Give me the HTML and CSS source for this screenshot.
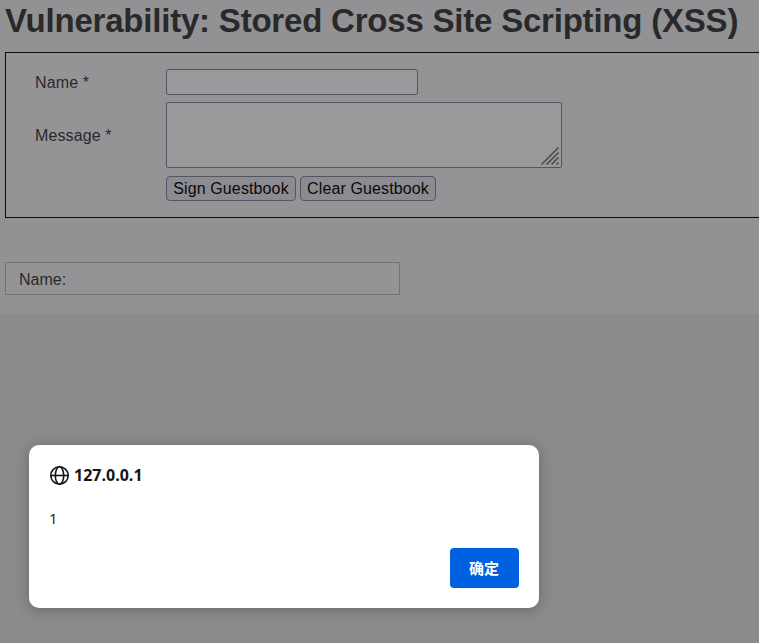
FILE: index.html
```html
<!DOCTYPE html>
<html lang="en">
<head>
<meta charset="utf-8">
<title>Vulnerability: Stored Cross Site Scripting (XSS)</title>
<link rel="stylesheet" href="styles.css">
</head>
<body>
<main class="page">
  <h1 class="title">Vulnerability: Stored Cross Site Scripting (XSS)</h1>
  <form class="guestbook">
    <label for="name">Name *</label>
    <input class="field name-field" id="name" type="text">
    <label for="message">Message *</label>
    <div class="message-wrap">
      <textarea class="field message-field" id="message"></textarea>
      <svg class="grip" width="18" height="18" viewBox="0 0 18 18" fill="none" stroke="#49494b" stroke-width="1.5"><path d="M.5 17.500 17.500.5M5.500 17.500 17.500 5.500M10.500 17.500 17.500 10.500M15.500 17.500 17.500 15.500"/></svg>
    </div>
    <div class="actions">
      <button class="btn sign" type="button">Sign Guestbook</button>
      <button class="btn clear" type="button">Clear Guestbook</button>
    </div>
  </form>
  <div class="comment">Name:</div>
</main>
<section class="dialog" role="dialog">
  <header class="origin">
    <svg width="20" height="20" viewBox="0 0 20 20" fill="none" stroke="#15141a" stroke-width="1.6"><circle cx="10.500" cy="10.500" r="8.700"/><ellipse cx="10.500" cy="10.500" rx="4.200" ry="8.700"/><path d="M1.800 10.500h17.400"/></svg>
    <span>127.0.0.1</span>
  </header>
  <p class="alert-text">1</p>
  <button class="ok" type="button">确定</button>
</section>
</body>
</html>
```

FILE: styles.css
```css
* { box-sizing: border-box; }
body {
  margin: 0;
  height: 643px;
  overflow: hidden;
  background: #8b8b8d;
  color: #29292b;
  font: 16px/20px "Liberation Sans", Arial, sans-serif;
}
.page {
  height: 314px;
  padding-left: 5px;
  background: #929294;
}
.title {
  margin: 0;
  height: 52px;
  font-size: 33px;
  letter-spacing: -.21px;
  line-height: 41px;
  white-space: nowrap;
}
.guestbook {
  display: grid;
  grid-template-columns: 131px 396px;
  grid-template-rows: 26px 66px 25px;
  row-gap: 7px;
  align-items: center;
  width: 780px;
  height: 166px;
  padding: 16px 0 0 29px;
  border: 1px solid #09090b;
  background: #949496;
}
.guestbook label {
  padding-top: 2px;
  letter-spacing: .12px;
}
.field {
  display: block;
  margin: 0;
  border: 1px solid #565663;
  border-radius: 2px;
  background: #99999b;
  outline: none;
  resize: none;
}
.name-field { width: 252px; height: 26px; }
.message-wrap { position: relative; height: 66px; }
.message-field { width: 396px; height: 66px; }
.grip { position: absolute; right: 3px; bottom: 3px; }
.actions {
  grid-column: 2;
  display: flex;
  gap: 4px;
  padding-top: 2px;
}
.btn {
  height: 25px;
  padding: 0;
  border: 1px solid #565663;
  border-radius: 4px;
  background: #8c8c90;
  color: #09090b;
  font: inherit;
  letter-spacing: .12px;
  white-space: nowrap;
}
.sign { width: 130px; }
.clear { width: 136px; }
.comment {
  width: 395px;
  height: 33px;
  margin-top: 44px;
  padding-left: 13px;
  border: 1px solid #747476;
  background: #949496;
  line-height: 33px;
}
.dialog {
  position: absolute;
  left: 29px;
  top: 445px;
  display: flex;
  flex-direction: column;
  width: 510px;
  height: 163px;
  padding: 20px;
  border-radius: 10px;
  background: #fff;
  color: #15141a;
  box-shadow: 0 2px 14px rgba(0, 0, 0, .25);
  font-family: "Open Sans", "Noto Sans CJK SC", sans-serif;
}
.origin {
  display: flex;
  align-items: center;
  gap: 5px;
  height: 20px;
  font-size: 16px;
  font-weight: 700;
}
.alert-text {
  margin: 23px 0 0;
  font-size: 15px;
  line-height: 20px;
}
.ok {
  align-self: flex-end;
  width: 69px;
  height: 40px;
  margin-top: 20px;
  padding: 0 1px 0 0;
  border: 0;
  border-radius: 4px;
  background: #0061e0;
  color: #fff;
  font: 700 15px/20px "Noto Sans CJK SC", sans-serif;
}
```
